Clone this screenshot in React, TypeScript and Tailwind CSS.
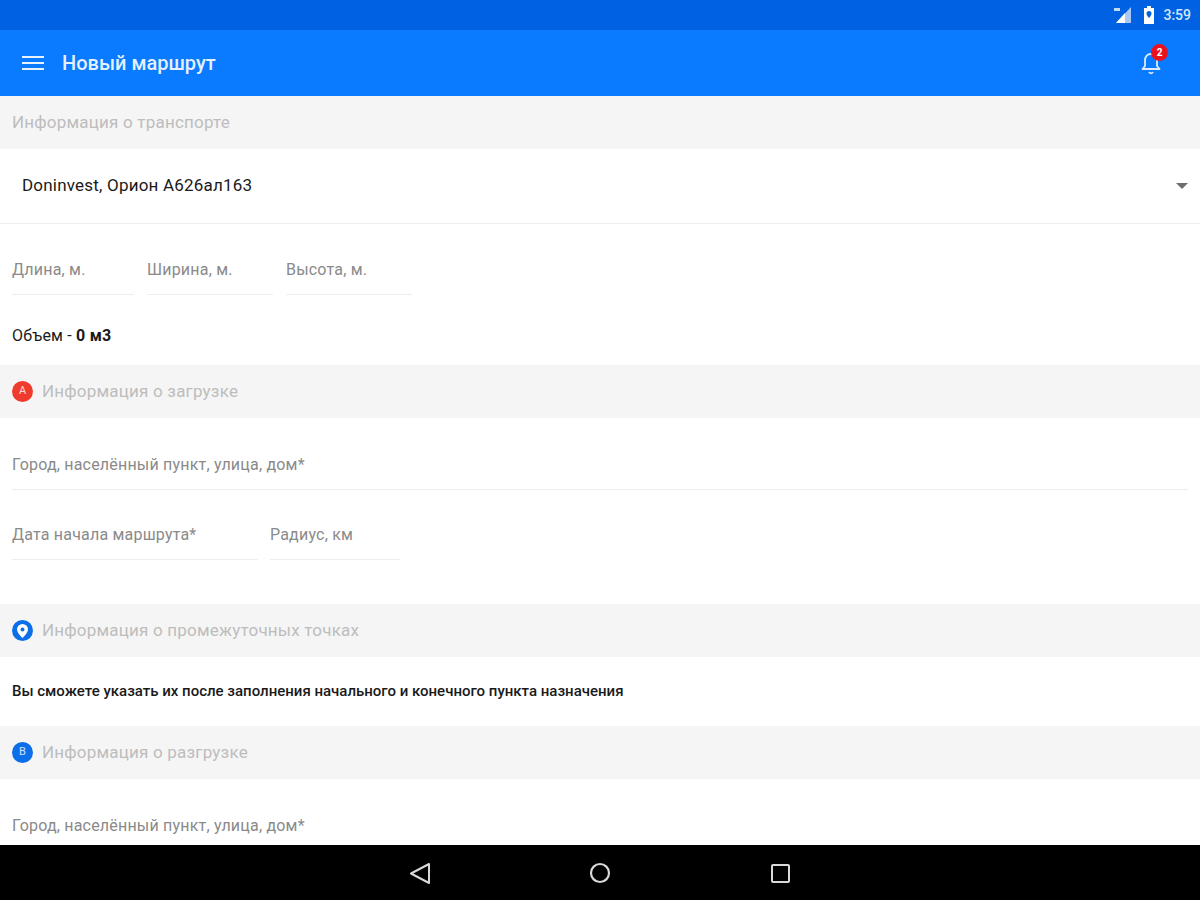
import { ChevronDown } from 'lucide-react'

function SectionHeader({ title, badge }: { title: string; badge?: React.ReactNode }) {
  return (
    <div className="h-[53px] bg-[#f5f5f5] flex items-center gap-[9px] px-3 shrink-0">
      {badge}
      <span className="text-[17px] text-[#bdbdbd] tracking-[0.2px]">{title}</span>
    </div>
  )
}

function Badge({ color, children }: { color: string; children: React.ReactNode }) {
  return (
    <span className={`w-[21px] h-[21px] rounded-full flex items-center justify-center text-[11px] text-white/80 ${color}`}>
      {children}
    </span>
  )
}

function Field({ label, className }: { label: string; className: string }) {
  return (
    <div className={`border-b border-[#eeeeee] h-[48px] pt-[11px] text-[16px] text-[#8a8a8a] tracking-[0.2px] ${className}`}>
      {label}
    </div>
  )
}

export default function App() {
  return (
    <div className="h-[900px] flex flex-col overflow-hidden bg-white font-['Roboto',sans-serif]">
      <div className="h-[30px] bg-[#0062e3] flex items-center justify-end gap-[8px] pr-[9px] shrink-0">
        <svg width="20" height="18" viewBox="0 0 20 18">
          <path d="M18 1v16H3z" fill="#a9c8f5" />
          <path d="M12 7v10H3z" fill="#ffffff" />
          <path d="M1 2h6v3H1z" fill="#c4d9f7" />
        </svg>
        <svg width="12" height="18" viewBox="0 0 12 18" className="ml-[2px]">
          <path d="M4 0h4v2h3v16H1V2h3z" fill="#ffffff" />
          <path d="M6 5a2.5 2.5 0 0 1 2.5 2.5c0 2-2.5 4.500-2.500 4.500S3.500 9.500 3.500 7.500A2.500 2.500 0 0 1 6 5z" fill="#0062e3" />
        </svg>
        <span className="text-[14px] font-medium text-[#d6e5fb]">3:59</span>
      </div>

      <div className="h-[66px] bg-[#0a7afe] flex items-center pl-[22px] pr-[38px] shrink-0">
        <div className="w-[22px] flex flex-col gap-[4px]">
          <span className="h-[2px] bg-white/90" />
          <span className="h-[2px] bg-white/90" />
          <span className="h-[2px] bg-white/90" />
        </div>
        <span className="ml-[18px] text-[20px] font-medium text-[#e4f0ff]">Новый маршрут</span>
        <div className="ml-auto relative w-[22px] h-[24px]">
          <svg width="22" height="24" viewBox="0 0 22 24" fill="none" stroke="#dcebff" strokeWidth="1.800" strokeLinejoin="round">
            <path d="M11 3c-4 0-6 3-6 6.500V15l-2.500 3h17L17 15V9.500C17 6 15 3 11 3z" />
            <path d="M9 21a2.200 2.200 0 0 0 4 0" />
          </svg>
          <span className="absolute -top-[7px] left-[11px] w-[17px] h-[17px] rounded-full bg-[#e8121f] text-white text-[10px] font-bold flex items-center justify-center">
            2
          </span>
        </div>
      </div>

      <main className="flex-1 min-h-0 overflow-hidden flex flex-col">
        <SectionHeader title="Информация о транспорте" />

        <div className="h-[75px] mx-0 border-b border-[#eeeeee] flex items-center justify-between pl-[22px] pr-[12px] shrink-0">
          <span className="text-[17px] text-[#1a1a1a] tracking-[0.2px]">Doninvest, Орион А626ал163</span>
          <svg width="12" height="6" viewBox="0 0 12 6"><path d="M0 0h12L6 6z" fill="#6e6e6e" /></svg>
        </div>

        <div className="flex px-3 pt-[23px] shrink-0">
          <Field label="Длина, м." className="w-[122px]" />
          <Field label="Ширина, м." className="w-[126px] ml-[13px]" />
          <Field label="Высота, м." className="w-[126px] ml-[13px]" />
        </div>

        <div className="h-[70px] px-3 flex items-center pt-[12px] text-[16px] text-[#1a1a1a] tracking-[0.2px] shrink-0">
          <span>Объем - <b>0 м3</b></span>
        </div>

        <SectionHeader title="Информация о загрузке" badge={<Badge color="bg-[#ef3b2d]">A</Badge>} />

        <div className="px-3 pt-[24px] shrink-0">
          <Field label="Город, населённый пункт, улица, дом*" className="w-full" />
          <div className="flex mt-[22px]">
            <Field label="Дата начала маршрута*" className="w-[246px]" />
            <Field label="Радиус, км" className="w-[130px] ml-[12px]" />
          </div>
        </div>

        <div className="h-[44px] shrink-0" />

        <SectionHeader
          title="Информация о промежуточных точках"
          badge={
            <Badge color="bg-[#0a6fe8]">
              <svg width="11" height="14" viewBox="0 0 11 14">
                <path fillRule="evenodd" d="M5.500 0A5.500 5.500 0 0 1 11 5.500C11 9 5.500 14 5.500 14S0 9 0 5.500A5.500 5.500 0 0 1 5.500 0zm0 3.500a2 2 0 1 0 0 4 2 2 0 0 0 0-4z" fill="#ffffff" />
              </svg>
            </Badge>
          }
        />

        <div className="h-[69px] px-3 flex items-center text-[15px] text-[#1a1a1a] font-medium shrink-0">
          Вы сможете указать их после заполнения начального и конечного пункта назначения
        </div>

        <SectionHeader title="Информация о разгрузке" badge={<Badge color="bg-[#0a6fe8]">B</Badge>} />

        <div className="px-3 pt-[24px] shrink-0">
          <Field label="Город, населённый пункт, улица, дом*" className="w-full" />
        </div>
      </main>

      <div className="h-[55px] bg-black flex items-center justify-center gap-[156px] shrink-0">
        <svg width="24" height="24" viewBox="0 0 24 24" fill="none" stroke="#d8d8d8" strokeWidth="2" strokeLinejoin="round">
          <path d="M21 3v19L3 12.500z" />
        </svg>
        <svg width="24" height="24" viewBox="0 0 24 24" fill="none" stroke="#d8d8d8" strokeWidth="2.200">
          <circle cx="12" cy="12" r="9" />
        </svg>
        <svg width="24" height="24" viewBox="0 0 24 24" fill="none" stroke="#d8d8d8" strokeWidth="2" strokeLinejoin="round">
          <rect x="4" y="4" width="17" height="17" rx="1" />
        </svg>
      </div>
    </div>
  )
}
